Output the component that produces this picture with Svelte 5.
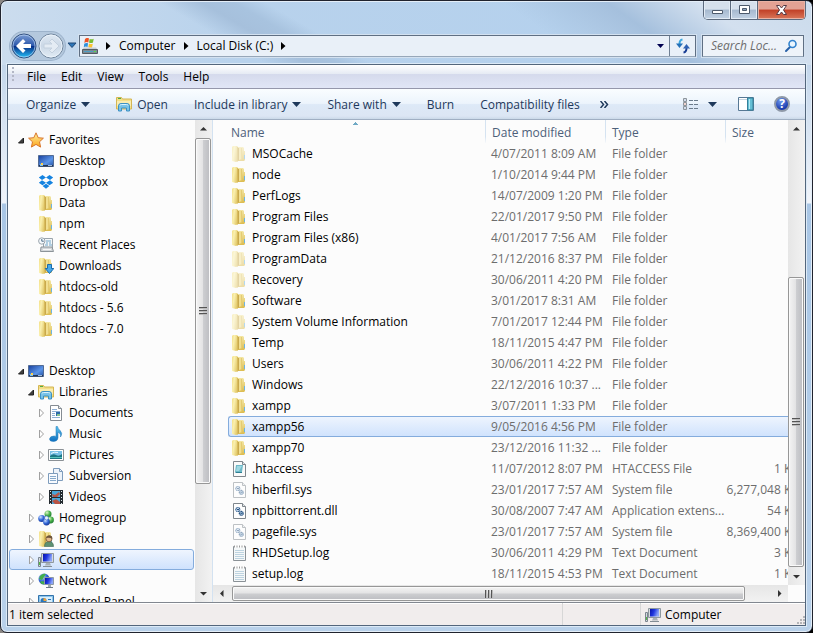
<script lang="ts">
	type TreeItem = {
		label: string;
		icon: string;
		level: number;
		state?: 'open' | 'closed';
		gap?: boolean;
	};

	type FileRow = {
		name: string;
		icon: string;
		date: string;
		type: string;
		size?: string;
		hidden?: boolean;
	};

	const menus = ['File', 'Edit', 'View', 'Tools', 'Help'];
	const crumbs = ['Computer', 'Local Disk (C:)'];

	const commands = [
		{ label: 'Organize', menu: true },
		{ label: 'Open', icon: 'library' },
		{ label: 'Include in library', menu: true },
		{ label: 'Share with', menu: true },
		{ label: 'Burn' },
		{ label: 'Compatibility files' }
	];

	const tree: TreeItem[] = [
		{ label: 'Favorites', icon: 'star', level: 0, state: 'open' },
		{ label: 'Desktop', icon: 'desktop', level: 1 },
		{ label: 'Dropbox', icon: 'dropbox', level: 1 },
		{ label: 'Data', icon: 'folder', level: 1 },
		{ label: 'npm', icon: 'folder', level: 1 },
		{ label: 'Recent Places', icon: 'recent', level: 1 },
		{ label: 'Downloads', icon: 'downloads', level: 1 },
		{ label: 'htdocs-old', icon: 'folder', level: 1 },
		{ label: 'htdocs - 5.6', icon: 'folder', level: 1 },
		{ label: 'htdocs - 7.0', icon: 'folder', level: 1 },
		{ label: 'Desktop', icon: 'desktop', level: 0, state: 'open', gap: true },
		{ label: 'Libraries', icon: 'library', level: 1, state: 'open' },
		{ label: 'Documents', icon: 'document', level: 2, state: 'closed' },
		{ label: 'Music', icon: 'music', level: 2, state: 'closed' },
		{ label: 'Pictures', icon: 'pictures', level: 2, state: 'closed' },
		{ label: 'Subversion', icon: 'subversion', level: 2, state: 'closed' },
		{ label: 'Videos', icon: 'videos', level: 2, state: 'closed' },
		{ label: 'Homegroup', icon: 'homegroup', level: 1, state: 'closed' },
		{ label: 'PC fixed', icon: 'user', level: 1, state: 'closed' },
		{ label: 'Computer', icon: 'computer', level: 1, state: 'closed' },
		{ label: 'Network', icon: 'network', level: 1, state: 'closed' },
		{ label: 'Control Panel', icon: 'control', level: 1, state: 'closed' }
	];

	const folder = (name: string, date: string, hidden = false): FileRow => ({
		name,
		icon: 'folder',
		date,
		type: 'File folder',
		hidden
	});

	const files: FileRow[] = [
		folder('MSOCache', '4/07/2011 8:09 AM', true),
		folder('node', '1/10/2014 9:44 PM'),
		folder('PerfLogs', '14/07/2009 1:20 PM'),
		folder('Program Files', '22/01/2017 9:50 PM'),
		folder('Program Files (x86)', '4/01/2017 7:56 AM'),
		folder('ProgramData', '21/12/2016 8:37 PM', true),
		folder('Recovery', '30/06/2011 4:20 PM', true),
		folder('Software', '3/01/2017 8:31 AM'),
		folder('System Volume Information', '7/01/2017 12:44 PM', true),
		folder('Temp', '18/11/2015 4:47 PM'),
		folder('Users', '30/06/2011 4:22 PM'),
		folder('Windows', '22/12/2016 10:37 ...'),
		folder('xampp', '3/07/2011 1:33 PM'),
		folder('xampp56', '9/05/2016 4:56 PM'),
		folder('xampp70', '23/12/2016 11:32 ...'),
		{ name: '.htaccess', icon: 'htaccess', date: '11/07/2012 8:07 PM', type: 'HTACCESS File', size: '1 KB' },
		{ name: 'hiberfil.sys', icon: 'gears', date: '23/01/2017 7:57 AM', type: 'System file', size: '6,277,048 KB', hidden: true },
		{ name: 'npbittorrent.dll', icon: 'gears', date: '30/08/2007 7:47 AM', type: 'Application extens...', size: '54 KB' },
		{ name: 'pagefile.sys', icon: 'gears', date: '23/01/2017 7:57 AM', type: 'System file', size: '8,369,400 KB', hidden: true },
		{ name: 'RHDSetup.log', icon: 'log', date: '30/06/2011 4:29 PM', type: 'Text Document', size: '3 KB' },
		{ name: 'setup.log', icon: 'log', date: '18/11/2015 4:53 PM', type: 'Text Document', size: '1 KB' }
	];

	let selectedFile = $state('xampp56');
	let selectedPlace = $state('Computer');
	let search = $state('');
</script>

{#snippet icon(name: string)}
	<svg class="icon" width="16" height="16" aria-hidden="true"><use href="#i-{name}" /></svg>
{/snippet}

{#snippet caret()}
	<svg class="caret" width="9" height="5" aria-hidden="true"><path d="M0 0h9L4.500 5z" fill="currentColor" /></svg>
{/snippet}

{#snippet scrollbar(axis: string, before: number, thumb: number, after: number)}
	<div class="scrollbar {axis}">
		<button class="step" aria-label="Scroll back">
			<svg width="7" height="7"><path d={axis === 'vertical' ? 'M0 5.500L3.500 2L7 5.500z' : 'M5.500 0L2 3.500L5.500 7z'} fill="#333" /></svg>
		</button>
		<div style:flex-grow={before}></div>
		<div class="thumb" style:flex-grow={thumb}><i></i><i></i><i></i></div>
		<div style:flex-grow={after}></div>
		<button class="step" aria-label="Scroll forward">
			<svg width="7" height="7"><path d={axis === 'vertical' ? 'M0 2L3.500 5.500L7 2z' : 'M2 0L5.500 3.500L2 7z'} fill="#333" /></svg>
		</button>
	</div>
{/snippet}

<svg class="sprite" width="0" height="0" aria-hidden="true">
	<defs>
		<linearGradient id="g-page" x2="1" y2=".4"><stop offset="0" stop-color="#f3df86" /><stop offset=".4" stop-color="#faf0b0" /><stop offset="1" stop-color="#e2c868" /></linearGradient>
		<linearGradient id="g-back" x2="0" y2="1"><stop offset="0" stop-color="#f3e6a4" /><stop offset="1" stop-color="#dcbc50" /></linearGradient>
		<linearGradient id="g-screen" x2="1" y2="1"><stop offset="0" stop-color="#173f9c" /><stop offset=".6" stop-color="#5b95e8" /><stop offset="1" stop-color="#234f9f" /></linearGradient>
		<linearGradient id="g-crt" x2="1" y2=".3"><stop offset="0" stop-color="#0713a8" /><stop offset=".5" stop-color="#2037e0" /><stop offset="1" stop-color="#8ca5f8" /></linearGradient>
		<linearGradient id="g-note" x2="0" y2="1"><stop offset="0" stop-color="#5cc3ee" /><stop offset="1" stop-color="#0d6fc0" /></linearGradient>
		<linearGradient id="g-star" x2="0" y2="1"><stop offset="0" stop-color="#fff0a0" /><stop offset="1" stop-color="#fba51b" /></linearGradient>
		<radialGradient id="g-ball" cx=".35" cy=".3" r=".8"><stop offset="0" stop-color="#cfe2ff" /><stop offset=".5" stop-color="#3469d8" /><stop offset="1" stop-color="#14308c" /></radialGradient>
		<radialGradient id="g-green" cx=".35" cy=".3" r=".8"><stop offset="0" stop-color="#dff7c8" /><stop offset=".5" stop-color="#4bb34b" /><stop offset="1" stop-color="#17702c" /></radialGradient>
		<linearGradient id="g-nav" x2="0" y2="1"><stop offset="0" stop-color="#7d9ed4" /><stop offset=".48" stop-color="#2c58ac" /><stop offset=".52" stop-color="#082f87" /><stop offset="1" stop-color="#24c4fb" /></linearGradient>
		<linearGradient id="g-off" x2="0" y2="1"><stop offset="0" stop-color="#dfe9f3" /><stop offset=".5" stop-color="#cbd8e6" /><stop offset="1" stop-color="#e2ecf5" /></linearGradient>
		<symbol id="i-folder" viewBox="0 0 16 16">
			<path d="M6 2V1h6l1 1v3h1v9l-1 1H6z" fill="url(#g-back)" />
			<path d="M1 1l1-1h4l1 1v14l-2 1-4-1z" fill="url(#g-page)" />
			<path d="M6 1h1v14l-1 1z" fill="#d8bb5c" />
			<path d="M7 2h1v12l-1 1z" fill="#c9a94c" />
			<path d="M8 2h3v11l-3 1z" fill="#f1df92" />
			<path d="M10.500 2v11" stroke="#e4cb72" />
			<path d="M13.500 9v4" stroke="#6db4e0" />
		</symbol>
		<symbol id="i-library" viewBox="0 0 16 16">
			<path d="M.5 13V1.500h5l1 1.500h9v10z" fill="#f4df88" stroke="#d4b654" />
			<path d="M2 2.500h3" stroke="#4fae48" />
			<path d="M1 5h14v5H1z" fill="#f9ecb0" />
			<path d="M2.500 15v-5q0-2.500 2.500-2.500h6q2.500 0 2.500 2.500v5h-3v-3h-5v3z" fill="#79c3e8" stroke="#3c91c4" />
			<path d="M4 9.500q0-1 1.500-1h5q1.500 0 1.500 1" stroke="#d9f3ff" fill="none" />
		</symbol>
		<symbol id="i-star" viewBox="0 0 16 16">
			<path d="M8 .8l2.200 4.900 5.200.5-3.900 3.600 1.100 5.300L8 12.400l-4.600 2.700 1.100-5.300L.6 6.200l5.200-.5z" fill="url(#g-star)" stroke="#d8762c" />
		</symbol>
		<symbol id="i-desktop" viewBox="0 0 16 16">
			<path d="M.5 2.500h15v11H.5z" fill="url(#g-screen)" stroke="#526b94" />
			<path d="M1 12h14v1.500H1z" fill="#26364e" />
			<path d="M2 11h3v2H2z" fill="#7cc3f2" /><path d="M3 10h2v2H3z" fill="#ffd04a" />
			<path d="M10 12.500h4" stroke="#9cb8da" />
		</symbol>
		<symbol id="i-dropbox" viewBox="0 0 16 16">
			<path d="M4.500 1L8 3.500 4 6 .8 3.600zM11.500 1L8 3.500 12 6l3.200-2.400zM4 6.200l4 2.600-3.500 2.400L.8 8.700zM12 6.200L8 8.800l3.500 2.400 3.700-2.500zM8 9.800l3.400 2.300L8 14.700l-3.400-2.600z" fill="#1583e0" />
		</symbol>
		<symbol id="i-recent" viewBox="0 0 16 16">
			<path d="M5.500 1.500h9v10h-9z" fill="#f4f7f9" stroke="#9aa4ac" />
			<path d="M8 4h5M8 6h2m1 0h2M7 8h3m1 0h3" stroke="#6fa5c8" />
			<path d="M3 10h11l1.500 4.500h-13z" fill="#d3d7da" stroke="#8c9499" />
			<path d="M5 12.500h8" stroke="#f8f8f8" />
			<circle cx="3.800" cy="4" r="3.200" fill="#f5f9fc" stroke="#9ba5ad" />
			<path d="M3.800 2v2.200h2" stroke="#4b6b86" fill="none" />
		</symbol>
		<symbol id="i-downloads" viewBox="0 0 16 16">
			<use href="#i-folder" />
			<path d="M9.500 6.500h4v4h2.300L11.500 15.500 7.300 10.500h2.200z" fill="#48a9e8" stroke="#1a6cad" />
		</symbol>
		<symbol id="i-document" viewBox="0 0 16 16">
			<path d="M2.500.5h8l3 3v12h-11z" fill="#fff" stroke="#858c93" />
			<path d="M10.500.5v3h3" fill="#e6eaee" stroke="#858c93" />
			<path d="M4 4.500h5M4 6.500h8M4 8.500h3M4 10.500h3M4 12.500h8" stroke="#8fb0d4" />
			<path d="M8 7h4v4H8z" fill="#2e6ba8" /><path d="M9 9h3v2H9z" fill="#86c28f" />
		</symbol>
		<symbol id="i-music" viewBox="0 0 16 16">
			<path d="M8 .5h1.500q.5 2.500 2.600 4 3 3 .4 6.500.8-3.500-2.500-4.700V12q-.3 3.200-4.500 3.500-4 0-4-2.500.5-3 4.500-3 1.200 0 2 .4z" fill="url(#g-note)" stroke="#1e76b6" stroke-width=".5" />
		</symbol>
		<symbol id="i-pictures" viewBox="0 0 16 16">
			<path d="M.5 2.500h15v11H.5z" fill="#fff" stroke="#8b9196" />
			<path d="M2 4h12v8H2z" fill="#78bfe6" /><path d="M2 9q3-3 6-1t6-1v5H2z" fill="#1d7686" />
			<path d="M2 10.500h12" stroke="#57c4bb" /><path d="M3 6.500q3-2 7-1" stroke="#e8f8ff" fill="none" />
		</symbol>
		<symbol id="i-subversion" viewBox="0 0 16 16">
			<path d="M5.500.5h6l3 3v9h-9z" fill="#edf3fa" stroke="#7e9cbc" />
			<path d="M11.500.5v3h3" fill="none" stroke="#7e9cbc" />
			<path d="M.5 5.500h9v10h-9z" fill="#f8fbff" stroke="#7e9cbc" />
			<path d="M2 8.500h6M2 10.500h6M2 12.500h6" stroke="#86a9cb" />
		</symbol>
		<symbol id="i-videos" viewBox="0 0 16 16">
			<path d="M1 1h14v14H1z" fill="#242b30" />
			<path d="M4 2h8v6H4zM4 9h8v6H4z" fill="#49a5d8" />
			<path d="M4 5l3 1 4-3 1 2-3 3H5zM4 12l4-2 4 3v2H7z" fill="#b75445" />
			<path d="M2.500 2v13M13.500 2v13" stroke="#dce8ec" stroke-dasharray="1 2" />
		</symbol>
		<symbol id="i-homegroup" viewBox="0 0 16 16">
			<circle cx="10" cy="4" r="3.500" fill="url(#g-green)" />
			<circle cx="3.700" cy="8.500" r="3.500" fill="url(#g-ball)" />
			<circle cx="12.500" cy="10" r="3.400" fill="url(#g-green)" />
			<circle cx="8.500" cy="12" r="3.400" fill="url(#g-ball)" />
			<circle cx="8.500" cy="8" r="2" fill="#e6f2ff" stroke="#3f6fc4" stroke-width=".6" />
		</symbol>
		<symbol id="i-user" viewBox="0 0 16 16">
			<use href="#i-folder" />
			<path d="M6.500 15.500q0-5 4.500-5t4.500 5z" fill="#5d9172" stroke="#3d6751" stroke-width=".6" />
			<circle cx="11" cy="7.800" r="3" fill="#e2b98c" stroke="#765334" stroke-width=".8" />
			<path d="M8 7q1-3 4-2.500T14 8q-2-2-6-1z" fill="#6b533c" />
		</symbol>
		<symbol id="i-computer" viewBox="0 0 16 16">
			<path d="M.5 5.500h2v9h-2z" fill="#d5dbe0" stroke="#7b858e" /><path d="M1 10h1v3H1z" fill="#55b946" />
			<path d="M3.500 1.500h12v9h-12z" fill="#d6dade" stroke="#8e989f" />
			<path d="M5 2h9v7.500H5z" fill="url(#g-crt)" />
			<path d="M8 11h4l1 2.500H7z" fill="#a9b1b8" /><path d="M5 14.500h9" stroke="#838d95" />
		</symbol>
		<symbol id="i-network" viewBox="0 0 16 16">
			<circle cx="6" cy="6" r="5.500" fill="url(#g-ball)" />
			<path d="M2 3q3-3 6-2L6 4 4 7 1 6zM4 8l3 1-1 2.500Q3 11 2 9z" fill="#43b04a" />
			<path d="M6.500 4.500h9v7h-9z" fill="#cdd5dc" stroke="#8e9aa5" /><path d="M7 5h8v6H7z" fill="url(#g-crt)" />
			<path d="M10 12h3v2h-3z" fill="#9da8b1" /><path d="M8 14.500h7" stroke="#6e7a85" />
		</symbol>
		<symbol id="i-control" viewBox="0 0 16 16">
			<path d="M.5 1.500h15v13H.5z" fill="#8cc5ec" stroke="#3273ab" />
			<path d="M2 3h12v10H2z" fill="#d9effc" />
			<circle cx="5.500" cy="7" r="3" fill="#2877bd" /><path d="M5.500 7V4a3 3 0 0 1 3 3z" fill="#f4a235" />
			<path d="M10 5.500h3M10 8.500h3M3 11.500h10" stroke="#2877bd" />
		</symbol>
		<symbol id="i-htaccess" viewBox="0 0 16 16">
			<path d="M2.500.5h9l3 3v12h-12z" fill="#fafafa" stroke="#7f868c" />
			<path d="M11.500.5v3h3" fill="#e3e7ea" stroke="#7f868c" />
			<path d="M5 4h7l-1 7H4z" fill="#6eb9c8" /><path d="M6 5h5l-3 5H5z" fill="#9fd8e2" /><path d="M4 11h7v1H5z" fill="#2e7f93" />
		</symbol>
		<symbol id="i-gears" viewBox="0 0 16 16">
			<path d="M2.500.5h9l3 3v12h-12z" fill="#fdfdfd" stroke="#7f868c" />
			<path d="M11.500.5v3h3" fill="#e3e7ea" stroke="#7f868c" />
			<circle cx="6.800" cy="6.500" r="2" fill="#dce9f5" stroke="#315f91" stroke-width="1.200" stroke-dasharray="1.200 .4" />
			<circle cx="10.300" cy="10.300" r="2" fill="#a7c4de" stroke="#244f7e" stroke-width="1.200" stroke-dasharray="1.200 .4" />
			<path d="M6 6.500h2M9.500 10.300h2" stroke="#244f7e" />
		</symbol>
		<symbol id="i-log" viewBox="0 0 16 16">
			<path d="M2.500 1.500h12v14h-12z" fill="#f5f8f9" stroke="#8a9196" />
			<path d="M3 1.500h11" stroke="#fff" stroke-width="2" /><path d="M3 1.500h11" stroke="#999" stroke-width="2" stroke-dasharray="1 1.500" />
			<path d="M4 5.500h9M4 7.500h9M4 9.500h9M4 11.500h9M4 13.500h9" stroke="#bdd3e0" />
		</symbol>
		<symbol id="i-drive" viewBox="0 0 16 16">
			<path d="M3 1q2-2 4-.5L6.300 4.500q-2-1-4 .5z" fill="#ef5325" /><path d="M7.700.9q2 1 4-.2L11 4.500q-2 1-4 0z" fill="#79bd32" />
			<path d="M2.200 5.700q2-1.300 3.900-.4L5.500 9q-2-1-3.700.3z" fill="#2f91dc" /><path d="M7 5.500q2 1 3.800.2L10 9.500q-2 .7-3.700-.4z" fill="#fbc32f" />
			<path d="M2 9.500h12l1.500 2H.5z" fill="#c8cdd1" /><path d="M.5 11.500h15v4H.5z" fill="#7f8a92" stroke="#525c63" />
			<path d="M2 13.500h9" stroke="#4b9fc7" /><path d="M12 13.500h2" stroke="#49e04e" />
		</symbol>
	</defs>
</svg>

<main class="window">
	<div class="controls">
		<button aria-label="Minimize">
			<svg width="13" height="12"><path d="M1.500 6.500h10v3h-10z" fill="#fff" stroke="#4d5a6c" /></svg>
		</button>
		<button aria-label="Maximize">
			<svg width="13" height="12"><path d="M1.500 1.500h10v8h-10z" fill="#fff" stroke="#4d5a6c" /><path d="M4.500 4.500h4v2h-4z" fill="#8da4bf" stroke="#4d5a6c" /></svg>
		</button>
		<button class="close" aria-label="Close">
			<svg width="13" height="12"><path d="M1.500 1.500h3l2 2.500 2-2.500h3L8.500 6l3 4.500h-3l-2-2.500-2 2.500h-3l3-4.500z" fill="#fff" stroke="#573b45" /></svg>
		</button>
	</div>

	<nav class="navigation">
		<div class="travel">
			<button aria-label="Back">
				<svg width="26" height="26" viewBox="0 0 26 26">
					<circle cx="13" cy="13" r="12" fill="url(#g-nav)" stroke="#33507f" />
					<circle cx="13" cy="13" r="11" fill="none" stroke="#b9d3f2" stroke-opacity=".7" />
					<path d="M12 6l-7 7 7 7 2.500-2.500-2.500-2.500h8v-4h-8l2.500-2.500z" fill="#fff" />
				</svg>
			</button>
			<button aria-label="Forward">
				<svg width="26" height="26" viewBox="0 0 26 26">
					<circle cx="13" cy="13" r="12" fill="url(#g-off)" stroke="#71869d" />
					<circle cx="13" cy="13" r="11" fill="none" stroke="#eef5fc" stroke-opacity=".8" />
					<path d="M14 6l7 7-7 7-2.500-2.500 2.500-2.500h-8v-4h8l-2.500-2.500z" fill="#e4ecf4" stroke="#c3d0de" />
				</svg>
			</button>
		</div>
		<button class="history" aria-label="Recent pages">
			<svg width="10" height="7"><path d="M1 1h8L5 5.500z" fill="#2d76b9" stroke="#214876" /></svg>
		</button>
		<div class="address">
			{@render icon('drive')}
			<svg width="5" height="8"><path d="M0 0l4.500 4L0 8z" /></svg>
			{#each crumbs as crumb}
				<button>{crumb}</button>
				<svg width="5" height="8"><path d="M0 0l4.500 4L0 8z" /></svg>
			{/each}
			<button class="previous" aria-label="Previous locations">
				<svg width="7" height="4"><path d="M0 0h7L3.500 4z" fill="currentColor" /></svg>
			</button>
			<button class="refresh" aria-label="Refresh">
				<svg width="16" height="16" viewBox="0 0 16 16">
					<path d="M7.500 1.500Q4.500 2 4.500 6" stroke="#3da8df" stroke-width="2" fill="none" /><path d="M1 5.500h7L4.500 10z" fill="#2370b8" />
					<path d="M8.500 14.500q3-.5 3-4.500" stroke="#173c94" stroke-width="2" fill="none" /><path d="M8 10.500h7L11.500 6z" fill="#2e62b4" />
				</svg>
			</button>
		</div>
		<label class="search">
			<input type="text" placeholder="Search Loc..." aria-label="Search Local Disk (C:)" bind:value={search} />
			<svg width="14" height="14" viewBox="0 0 14 14">
				<path d="M6 8L2 12" stroke="#2861a8" stroke-width="2" stroke-linecap="round" />
				<circle cx="8.500" cy="5" r="3.500" fill="#eaf6ff" stroke="#3383ce" stroke-width="1.600" />
			</svg>
		</label>
	</nav>

	<section class="client">
		<div class="menubar">
			{#each menus as menu}
				<button>{menu}</button>
			{/each}
		</div>

		<div class="toolbar">
			{#each commands as command}
				<button>
					{#if command.icon}{@render icon(command.icon)}{/if}
					{command.label}
					{#if command.menu}{@render caret()}{/if}
				</button>
			{/each}
			<button class="more" aria-label="More commands">
				<svg width="9" height="7"><path d="M.5 0l3 3.500-3 3.500M4.500 0l3 3.500-3 3.500" fill="none" stroke="#1e395b" stroke-width="1.500" /></svg>
			</button>
			<div class="view">
				<button aria-label="Change your view">
					<svg width="16" height="13">
						<path d="M.5.5h3v3h-3zM.5 4.500h3v3h-3zM.5 8.500h3v3h-3z" fill="#fff" stroke="#8d949b" />
						<path d="M1.500 2h1" stroke="#4c79b5" /><path d="M1.500 6h1" stroke="#c34d3a" /><path d="M1.500 10h1" stroke="#4c79b5" />
						<path d="M6 2.500h4m1 0h4M6 6.500h4m1 0h4M6 10.500h4m1 0h4" stroke="#6b7b8b" />
					</svg>
				</button>
				<button aria-label="More view options">{@render caret()}</button>
				<button aria-label="Preview pane">
					<svg width="16" height="14">
						<path d="M.5.5h15v13H.5z" fill="#fff" stroke="#577894" /><path d="M1 2.500h14" stroke="#c5d3df" />
						<path d="M9.500 1h5.500v12H9.500z" fill="#65bfd5" stroke="#34809a" /><path d="M11.500 2v10" stroke="#b5eaf4" />
					</svg>
				</button>
				<button class="help" aria-label="Get help">?</button>
			</div>
		</div>

		<div class="panes">
			<aside>
				<ul>
					{#each tree as item}
						<li class:gap={item.gap}>
							<button
								class="place level-{item.level}"
								class:selected={item.label === selectedPlace}
								onclick={() => (selectedPlace = item.label)}
							>
								<svg class="twist" width="7" height="10" viewBox="0 0 7 10" aria-hidden="true">
									{#if item.state === 'open'}
										<path d="M5.500 3v5h-5z" fill="#404040" stroke="#222" />
									{:else if item.state === 'closed'}
										<path d="M1.500 1l4 4-4 4z" fill="#fff" stroke="#a0a0a0" />
									{/if}
								</svg>
								{@render icon(item.icon)}
								{item.label}
							</button>
						</li>
					{/each}
				</ul>
				{@render scrollbar('vertical', 1, 346, 101)}
			</aside>

			<div class="listing">
				<div class="listing-main">
					<div class="files">
						<table>
							<thead>
								<tr>
									<th class="name sorted">Name</th>
									<th class="date">Date modified</th>
									<th class="type">Type</th>
									<th class="size">Size</th>
								</tr>
							</thead>
							<tbody>
								{#each files as file}
									<tr class:selected={file.name === selectedFile} onclick={() => (selectedFile = file.name)}>
										<td class="name">
											<span class="file" class:faded={file.hidden}>{@render icon(file.icon)}{file.name}</span>
										</td>
										<td>{file.date}</td>
										<td>{file.type}</td>
										<td class="size">{file.size ?? ''}</td>
									</tr>
								{/each}
							</tbody>
						</table>
					</div>
					{@render scrollbar('horizontal', 2, 513, 26)}
				</div>
				<div class="listing-side">
					{@render scrollbar('vertical', 141, 289, 1)}
				</div>
			</div>
		</div>

		<footer>
			<span class="count">1 item selected</span>
			<span class="spacer"></span>
			<span class="zone">
				{@render icon('computer')}
				Computer
			</span>
			<svg class="grip" width="9" height="9"><path d="M7 1h2M4 4h2m1 0h2M1 7h2m1 0h2m1 0h2" stroke="#b5b5b8" stroke-width="2" /></svg>
		</footer>
	</section>
</main>

<style>
	:global(body) {
		background: linear-gradient(90deg, #8b8784, #000);
	}

	* {
		box-sizing: border-box;
	}

	.sprite {
		position: absolute;
	}

	.window {
		display: flex;
		flex-direction: column;
		height: 100vh;
		padding: 0 6px 6px;
		border: 1px solid #20232e;
		border-radius: 7px;
		overflow: hidden;
		box-shadow: inset 0 0 0 1px #e4eef8;
		font: 12px/21px 'Segoe UI', 'Open Sans', sans-serif;
		color: #000;
		background:
			linear-gradient(30deg, transparent 50%, #a6c0dc 58%, #a8c3df 64%, transparent 70%) 0 0 / 52% 64px no-repeat,
			linear-gradient(35deg, transparent 25%, #a5c0dd 50%, #d3e0ef 72%, #cbdbec) 100% 0 / 40% 64px no-repeat,
			linear-gradient(90deg, #cbdcee, #b8d2ec 30%, #b5d1ed 70%, #c9daed) 0 0 / 100% 64px no-repeat,
			linear-gradient(#bfd3e9, #c3d6eb 64px, #f0f4fa 202px, #a9c6e5 203px, #b9d1ea);
	}

	button {
		padding: 0;
		border: 0;
		background: none;
		font: inherit;
		color: inherit;
		white-space: nowrap;
	}

	svg {
		flex: none;
		display: block;
	}

	.controls {
		display: flex;
		align-self: flex-end;
		height: 19px;
		border: 1px solid #5c6a7d;
		border-top: 0;
		border-radius: 0 0 5px 5px;
		overflow: hidden;
	}

	.controls button {
		display: flex;
		align-items: center;
		justify-content: center;
		width: 27px;
		border-right: 1px solid #5c6a7d;
		box-shadow: inset 0 0 0 1px #e2ebf5;
		background: linear-gradient(#d6e0ec 45%, #a6b9cf 50%, #c2d2e4);
	}

	.controls .close {
		width: 47px;
		border-right: 0;
		box-shadow: inset 0 0 0 1px #e9b2a4;
		background: linear-gradient(#e3a294 45%, #c14027 50%, #d9775a);
	}

	.navigation {
		display: flex;
		align-items: center;
		height: 44px;
		padding: 7px 2px 0 3px;
	}

	.travel {
		display: flex;
		gap: 1px;
		padding: 1px;
		border-radius: 14px;
		background: #b4c8dd;
		box-shadow: 0 0 0 1px #9db3cb;
	}

	.history {
		margin: 0 2px;
	}

	.address {
		display: flex;
		flex: 1;
		align-items: center;
		gap: 8px;
		height: 22px;
		padding-left: 2px;
		border: 1px solid #5f6f83;
		border-bottom-color: #97a7b9;
		background: #e9f0f8;
		box-shadow: 0 0 0 1px #d3e1f0;
	}

	.previous {
		margin-left: auto;
		color: #000050;
	}

	.refresh {
		display: flex;
		align-items: center;
		justify-content: center;
		align-self: stretch;
		width: 26px;
		margin-left: -3px;
		border-left: 1px solid #6f8094;
	}

	.search {
		display: flex;
		align-items: center;
		width: 102px;
		height: 22px;
		margin-left: 6px;
		padding: 0 5px 0 8px;
		border: 1px solid #5f6f83;
		border-bottom-color: #97a7b9;
		background: #eef3f9;
		box-shadow: 0 0 0 1px #d3e1f0;
	}

	.search input {
		flex: 1;
		min-width: 0;
		padding: 0;
		border: 0;
		outline: 0;
		background: none;
		font: inherit;
		font-style: italic;
	}

	.search input::placeholder {
		color: #6d6d6d;
		opacity: 1;
	}

	.client {
		display: flex;
		flex: 1;
		flex-direction: column;
		min-height: 0;
		border: 1px solid #53667c;
		background: #fcfcfc;
		box-shadow: 0 0 0 1px #dceaf7;
	}

	.menubar {
		display: flex;
		flex: none;
		gap: 15px;
		height: 24px;
		padding-left: 19px;
		border-bottom: 1px solid #9597ab;
		background:
			radial-gradient(circle at 1px 1px, #b3b7c6 1px, transparent 1px) 4px 2px / 8px 4px no-repeat,
			radial-gradient(circle at 1px 1px, #b3b7c6 1px, transparent 1px) 4px 6px / 8px 4px no-repeat,
			radial-gradient(circle at 1px 1px, #b3b7c6 1px, transparent 1px) 4px 10px / 8px 4px no-repeat,
			radial-gradient(circle at 1px 1px, #b3b7c6 1px, transparent 1px) 4px 14px / 8px 4px no-repeat,
			linear-gradient(#fff, #e6ebf4 38%, #d5daec 40%, #e1e6f6);
	}

	.toolbar {
		display: flex;
		flex: none;
		align-items: center;
		gap: 26px;
		height: 31px;
		padding: 0 15px 0 18px;
		border-bottom: 1px solid #a0afc3;
		color: #1e395b;
		background: linear-gradient(#fafdff, #ecf4fc 48%, #dde9f7 52%, #dce6f4 90%, #cbd9e9);
	}

	.toolbar button {
		display: flex;
		align-items: center;
		gap: 5px;
	}

	.toolbar .more {
		margin-left: -6px;
	}

	.view {
		display: flex;
		align-items: center;
		margin-left: auto;
	}

	.view button:nth-child(2) {
		margin: 0 21px 0 9px;
	}

	.view .help {
		justify-content: center;
		width: 16px;
		height: 16px;
		margin-left: 20px;
		border: 2px solid #8f99a8;
		border-radius: 50%;
		background: radial-gradient(circle at 40% 25%, #6e9af0, #1c3cae 70%);
		color: #fff;
		font-weight: 700;
		line-height: 12px;
	}

	.panes {
		display: flex;
		flex: 1;
		min-height: 0;
	}

	aside {
		display: flex;
		flex: none;
		width: 205px;
		border-right: 1px solid #d3e2f1;
	}

	ul {
		flex: 1;
		margin: 0;
		padding: 9px 1px 0 1px;
		overflow: hidden;
		list-style: none;
	}

	.gap {
		margin-top: 21px;
	}

	.place {
		display: flex;
		align-items: center;
		width: 100%;
		height: 21px;
		padding-left: 8px;
		border: 1px solid transparent;
		border-radius: 3px;
	}

	.level-1 {
		padding-left: 18px;
	}

	.level-2 {
		padding-left: 28px;
	}

	.twist {
		margin-right: 3px;
	}

	.place .icon {
		margin-right: 5px;
	}

	.place.selected {
		border-color: #84acdd;
		background: linear-gradient(#eff5fe, #cfe2fd);
	}

	.listing {
		display: flex;
		flex: 1;
		min-width: 0;
	}

	.listing-main {
		display: flex;
		flex: 1;
		flex-direction: column;
		min-width: 0;
	}

	.listing-side {
		display: flex;
		padding-bottom: 17px;
	}

	.files {
		flex: 1;
		min-height: 0;
		padding-left: 15px;
		overflow: hidden;
	}

	table {
		width: calc(100% + 17px);
		table-layout: fixed;
		border-collapse: separate;
		border-spacing: 0;
	}

	th,
	td {
		padding: 0 0 0 6px;
		overflow: hidden;
		font-weight: 400;
		text-align: left;
		white-space: nowrap;
	}

	th {
		height: 23px;
		padding-top: 2px;
		color: #4c607a;
		border-left: 1px solid;
		border-image: linear-gradient(#d5e3f1 70%, transparent) 1;
	}

	th.name {
		padding-left: 3px;
		border: 0;
	}

	.sorted {
		background: conic-gradient(from 135deg at 50% 0, #6fa9c4 90deg, transparent 0) 124px 2px / 6px 3px no-repeat;
	}

	th.date,
	th.type {
		width: 120px;
	}

	th.size {
		width: 80px;
	}

	td {
		height: 21px;
		padding-left: 6px;
		border: solid transparent;
		border-width: 1px 0;
		color: #6d6d6d;
		line-height: 19px;
	}

	td.name {
		padding-left: 2px;
		border-left-width: 1px;
		border-radius: 3px 0 0 3px;
		color: #000;
	}

	td:nth-child(3) {
		padding-left: 7px;
	}

	td.size {
		padding: 0 6px 0 0;
		text-align: right;
	}

	.file {
		display: flex;
		align-items: center;
		gap: 5px;
	}

	.faded .icon {
		opacity: 0.5;
	}

	tr.selected td {
		border-color: #84acdd;
		background: linear-gradient(#eff5fe, #cfe2fd) border-box;
	}

	.scrollbar {
		display: flex;
		flex: none;
	}

	.vertical {
		flex-direction: column;
		width: 17px;
		background: linear-gradient(90deg, #e6e6e6, #f2f2f2);
	}

	.horizontal {
		height: 17px;
		background: linear-gradient(#e6e6e6, #f2f2f2);
	}

	.step {
		display: flex;
		flex: none;
		align-items: center;
		justify-content: center;
		width: 17px;
		height: 17px;
	}

	.thumb {
		display: flex;
		flex-basis: 0;
		align-items: center;
		justify-content: center;
		gap: 1px;
		margin: 1px 0;
		border: 1px solid #979797;
		border-radius: 2px;
		box-shadow: inset 0 0 0 1px #fafafa;
		background: linear-gradient(#f4f4f4, #e3e3e4 48%, #cdced1 52%, #bcbdc1);
	}

	.vertical .thumb {
		flex-direction: column;
		margin: 0 1px 0 0;
		background: linear-gradient(90deg, #f4f4f4, #e3e3e4 48%, #cdced1 52%, #bcbdc1);
	}

	.thumb i {
		width: 2px;
		height: 8px;
		border-left: 1px solid #555;
		border-right: 1px solid #bbb;
	}

	.vertical .thumb i {
		width: 8px;
		height: 2px;
		border: 0;
		border-top: 1px solid #555;
		border-bottom: 1px solid #bbb;
	}

	footer {
		display: flex;
		flex: none;
		height: 23px;
		padding-left: 1px;
		border-top: 1px solid #828790;
		background: #f1eded;
		box-shadow: inset 0 1px 0 #fff;
		line-height: 24px;
	}

	.count {
		flex: 1;
	}

	.spacer {
		width: 78px;
		border-left: 1px solid #d7d7d7;
	}

	.zone {
		display: flex;
		align-items: center;
		gap: 4px;
		width: 156px;
		padding: 2px 0 0 4px;
		border-left: 1px solid #d7d7d7;
	}

	.grip {
		align-self: flex-end;
	}
</style>
